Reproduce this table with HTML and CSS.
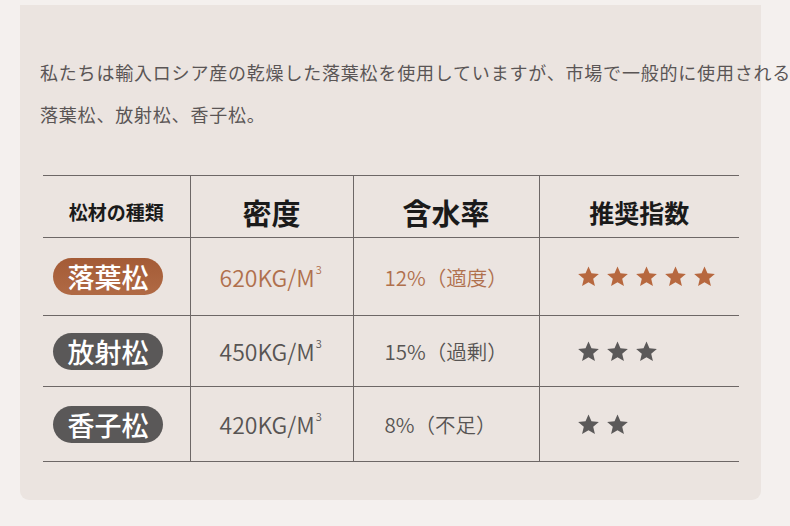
FILE: index.html
```html
<!DOCTYPE html>
<html lang="ja">
<head>
<meta charset="utf-8">
<link rel="stylesheet" href="styles.css">
</head>
<body>
<div class="card">
  <p class="intro">私たちは輸入ロシア産の乾燥した落葉松を使用していますが、市場で一般的に使用される<br>落葉松、放射松、香子松。</p>
  <table class="spec">
    <colgroup>
      <col class="c1"><col class="c2"><col class="c3"><col class="c4">
    </colgroup>
    <thead>
      <tr class="head">
        <th class="h-kind">松材の種類</th>
        <th class="h-big">密度</th>
        <th class="h-big">含水率</th>
        <th class="h-mid">推奨指数</th>
      </tr>
    </thead>
    <tbody>
      <tr class="r1 best">
        <td class="kind"><span class="pill">落葉松</span></td>
        <td class="dens">620KG/M<sup>3</sup></td>
        <td class="moist">12%（適度）</td>
        <td class="stars"><div class="star-row">
          <svg class="star" viewBox="0 0 24 24"><path d="M12 1.5l3.1 7.1 7.7.7-5.9 5.1 1.8 7.6L12 18l-6.7 4 1.8-7.6-5.9-5.1 7.7-.7z"/></svg>
          <svg class="star" viewBox="0 0 24 24"><path d="M12 1.5l3.1 7.1 7.7.7-5.9 5.1 1.8 7.6L12 18l-6.7 4 1.8-7.6-5.9-5.1 7.7-.7z"/></svg>
          <svg class="star" viewBox="0 0 24 24"><path d="M12 1.5l3.1 7.1 7.7.7-5.9 5.1 1.8 7.6L12 18l-6.7 4 1.8-7.6-5.9-5.1 7.7-.7z"/></svg>
          <svg class="star" viewBox="0 0 24 24"><path d="M12 1.5l3.1 7.1 7.7.7-5.9 5.1 1.8 7.6L12 18l-6.7 4 1.8-7.6-5.9-5.1 7.7-.7z"/></svg>
          <svg class="star" viewBox="0 0 24 24"><path d="M12 1.5l3.1 7.1 7.7.7-5.9 5.1 1.8 7.6L12 18l-6.7 4 1.8-7.6-5.9-5.1 7.7-.7z"/></svg>
        </div></td>
      </tr>
      <tr class="r2">
        <td class="kind"><span class="pill">放射松</span></td>
        <td class="dens">450KG/M<sup>3</sup></td>
        <td class="moist">15%（過剰）</td>
        <td class="stars"><div class="star-row">
          <svg class="star" viewBox="0 0 24 24"><path d="M12 1.5l3.1 7.1 7.7.7-5.9 5.1 1.8 7.6L12 18l-6.7 4 1.8-7.6-5.9-5.1 7.7-.7z"/></svg>
          <svg class="star" viewBox="0 0 24 24"><path d="M12 1.5l3.1 7.1 7.7.7-5.9 5.1 1.8 7.6L12 18l-6.7 4 1.8-7.6-5.9-5.1 7.7-.7z"/></svg>
          <svg class="star" viewBox="0 0 24 24"><path d="M12 1.5l3.1 7.1 7.7.7-5.9 5.1 1.8 7.6L12 18l-6.7 4 1.8-7.6-5.9-5.1 7.7-.7z"/></svg>
        </div></td>
      </tr>
      <tr class="r3">
        <td class="kind"><span class="pill">香子松</span></td>
        <td class="dens">420KG/M<sup>3</sup></td>
        <td class="moist">8%（不足）</td>
        <td class="stars"><div class="star-row">
          <svg class="star" viewBox="0 0 24 24"><path d="M12 1.5l3.1 7.1 7.7.7-5.9 5.1 1.8 7.6L12 18l-6.7 4 1.8-7.6-5.9-5.1 7.7-.7z"/></svg>
          <svg class="star" viewBox="0 0 24 24"><path d="M12 1.5l3.1 7.1 7.7.7-5.9 5.1 1.8 7.6L12 18l-6.7 4 1.8-7.6-5.9-5.1 7.7-.7z"/></svg>
        </div></td>
      </tr>
    </tbody>
  </table>
</div>
</body>
</html>
```
FILE: styles.css
```css
html, body {
  margin: 0;
  padding: 0;
  overflow: hidden;
}
body {
  background: #f4f0ee;
  font-family: "Noto Sans CJK JP", "Noto Sans", sans-serif;
  width: 790px;
  height: 526px;
}
.card {
  margin: 5px 0 0 20px;
  width: 741px;
  height: 495px;
  box-sizing: border-box;
  background: #ebe4e0;
  border-radius: 0 0 9px 9px;
  padding: 46px 0 0 20px;
}
.intro {
  margin: 0;
  font-size: 18px;
  letter-spacing: 0.8px;
  line-height: 42px;
  color: #5a5555;
  white-space: nowrap;
}
.spec {
  margin: 40px 0 0 3px;
  border-collapse: collapse;
  table-layout: fixed;
  width: 696px;
}
.c1 { width: 147px; }
.c2 { width: 163px; }
.c3 { width: 186px; }
.c4 { width: 200px; }
.spec th, .spec td {
  border-top: 1.5px solid #6d6766;
  border-bottom: 1.5px solid #6d6766;
  border-left: 1.5px solid #6d6766;
  padding: 0;
  vertical-align: middle;
}
.spec th:first-child, .spec td:first-child { border-left: none; }
.head { height: 62px; }
.head th {
  color: #1a1a1a;
  text-align: center;
  padding-top: 10px;
}
.h-kind { font-size: 19px; font-weight: 700; padding-right: 10px; }
.h-big { font-size: 29px; font-weight: 700; }
.h-mid { font-size: 25px; font-weight: 700; }
.r1 { height: 78px; }
.r2 { height: 71px; }
.r3 { height: 75px; }
.kind { padding-left: 10px !important; }
.pill {
  display: inline-flex;
  align-items: center;
  justify-content: center;
  width: 110px;
  height: 37px;
  border-radius: 19px;
  background: #5a5858;
  color: #ffffff;
  font-size: 27px;
  font-weight: 500;
  line-height: 1;
}
.best .pill {
  background: linear-gradient(180deg, #a45b36, #b06a45);
}
.dens {
  padding-left: 29px !important;
  font-size: 23px;
  font-weight: 350;
  color: #575453;
}
.dens sup {
  font-size: 11px;
  vertical-align: 0;
  position: relative;
  top: -13px;
  margin-left: 1px;
}
.moist {
  padding-left: 31px !important;
  font-size: 20.5px;
  font-weight: 350;
  color: #575453;
}
.best .dens, .best .moist { color: #b0704d; }
.stars {
  padding-left: 37px !important;
  fill: #5b5959;
}
.best .stars { fill: #b7683f; }
.star-row {
  display: flex;
  gap: 6px;
  align-items: center;
}
.star {
  width: 23px;
  height: 23px;
}
```
